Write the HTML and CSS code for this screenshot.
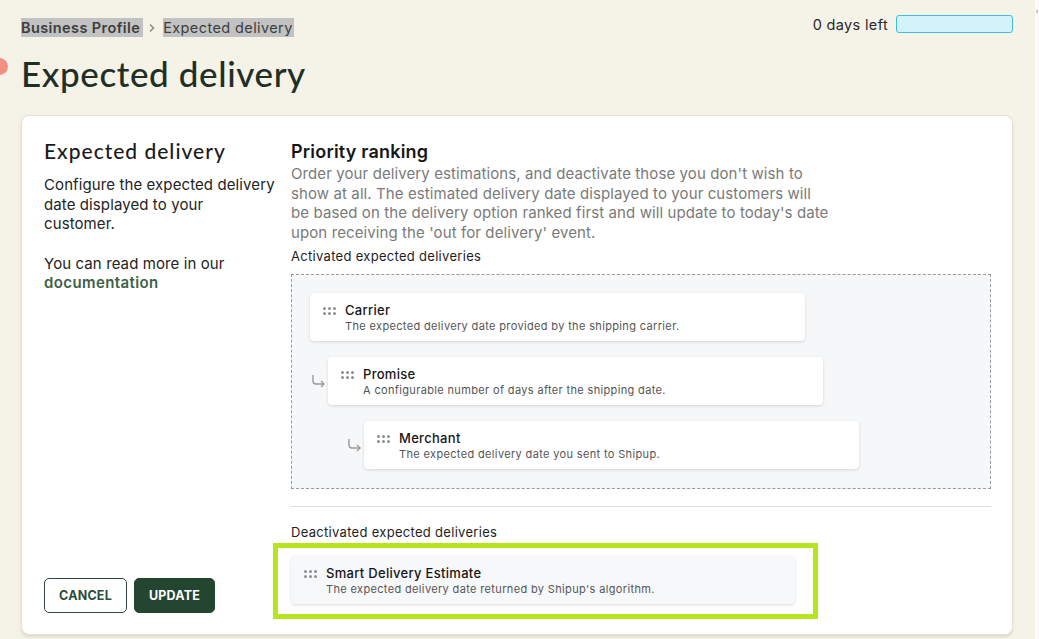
FILE: index.html
```html
<!DOCTYPE html>
<html lang="en">
  <head>
    <meta charset="UTF-8" />
    <meta name="viewport" content="width=device-width, initial-scale=1.0" />
    <title>Expected delivery</title>
    <link rel="stylesheet" href="styles.css">
  </head>
  <body>
    <div class="page">
      <span class="dot"></span>

      <header class="topbar">
        <nav class="crumbs">
          <span class="crumb crumb-parent">Business Profile</span>
          <svg class="crumb-sep" width="10" height="10" viewBox="0 0 10 10">
            <path d="M3 1.5 L6.5 5 L3 8.5" fill="none" stroke="#8a8a8a" stroke-width="1.5" />
          </svg>
          <span class="crumb">Expected delivery</span>
        </nav>
        <div class="trial">
          <span>0 days left</span>
          <div class="trial-bar"></div>
        </div>
      </header>

      <h1 class="page-title">Expected delivery</h1>

      <section class="card">
        <div class="intro">
          <h2>Expected delivery</h2>
          <p>Configure the expected delivery date displayed to your customer.</p>
          <p>You can read more in our <a href="#" class="doc-link">documentation</a></p>

          <div class="actions">
            <button class="btn btn-outline">CANCEL</button>
            <button class="btn btn-primary">UPDATE</button>
          </div>
        </div>

        <div class="ranking">
          <h3>Priority ranking</h3>
          <p class="lead">
            Order your delivery estimations, and deactivate those you don't wish to
            show at all. The estimated delivery date displayed to your customers will
            be based on the delivery option ranked first and will update to today's date
            upon receiving the 'out for delivery' event.
          </p>

          <div class="list-label">Activated expected deliveries</div>
          <div class="dropzone">
            <div class="row">
              <div class="item">
                <span class="grip"><i></i><i></i><i></i><i></i><i></i><i></i></span>
                <div>
                  <div class="item-title">Carrier</div>
                  <div class="item-desc">The expected delivery date provided by the shipping carrier.</div>
                </div>
              </div>
            </div>
            <div class="row">
              <svg class="fallback" width="18" height="16" viewBox="0 0 18 16">
                <path d="M3 2 V8 Q3 11 6 11 H14" fill="none" stroke="#9a9a9a" stroke-width="1.4" />
                <path d="M11 8 L14 11 L11 14" fill="none" stroke="#9a9a9a" stroke-width="1.4" />
              </svg>
              <div class="item">
                <span class="grip"><i></i><i></i><i></i><i></i><i></i><i></i></span>
                <div>
                  <div class="item-title">Promise</div>
                  <div class="item-desc">A configurable number of days after the shipping date.</div>
                </div>
              </div>
            </div>
            <div class="row row-deep">
              <svg class="fallback" width="18" height="16" viewBox="0 0 18 16">
                <path d="M3 2 V8 Q3 11 6 11 H14" fill="none" stroke="#9a9a9a" stroke-width="1.4" />
                <path d="M11 8 L14 11 L11 14" fill="none" stroke="#9a9a9a" stroke-width="1.4" />
              </svg>
              <div class="item">
                <span class="grip"><i></i><i></i><i></i><i></i><i></i><i></i></span>
                <div>
                  <div class="item-title">Merchant</div>
                  <div class="item-desc">The expected delivery date you sent to Shipup.</div>
                </div>
              </div>
            </div>
          </div>

          <hr class="divider" />

          <div class="list-label">Deactivated expected deliveries</div>
          <div class="highlight">
            <div class="item item-off">
              <span class="grip"><i></i><i></i><i></i><i></i><i></i><i></i></span>
              <div>
                <div class="item-title">Smart Delivery Estimate</div>
                <div class="item-desc">The expected delivery date returned by Shipup's algorithm.</div>
              </div>
            </div>
          </div>
        </div>
      </section>
    </div>
    <div class="scrollbar"><span></span></div>
  </body>
</html>
```

FILE: styles.css
```css
:root {
  --page-bg: #f5f2e8;
  --ink: #1f2f25;
  --green: #24452f;
  --muted: #7a7a7a;
  --text: #242424;
}

*,
*::before,
*::after {
  box-sizing: border-box;
}

body {
  margin: 0;
  background-color: var(--page-bg);
  font-family: Inter, "Liberation Sans", Arial, sans-serif;
  color: var(--text);
  display: flex;
  min-height: 639px;
  overflow: hidden;
}

.page {
  position: relative;
  flex: 1;
  padding: 18px 22px 0 21px;
}

.scrollbar {
  width: 4px;
  background-color: #fbfbfa;
  position: relative;
}

.scrollbar span {
  position: absolute;
  top: 10px;
  left: 1px;
  width: 2px;
  height: 3px;
  background-color: #c8c8c8;
}

.dot {
  position: absolute;
  left: -9px;
  top: 58px;
  width: 17px;
  height: 17px;
  border-radius: 50%;
  background-color: #f28f80;
}

/* header */

.topbar {
  display: flex;
  justify-content: space-between;
  align-items: flex-start;
}

.crumbs {
  display: flex;
  align-items: center;
  font-size: 14.5px;
  line-height: 19px;
  letter-spacing: 0.4px;
  color: #3d3d3d;
}

.crumb {
  background-color: #c2c2c2;
  padding-right: 1px;
}

.crumb-parent {
  font-weight: 600;
  padding-right: 3px;
}

.crumb-sep {
  margin: 0 6px 0 4px;
}

.trial {
  display: flex;
  align-items: center;
  gap: 8px;
  font-size: 14.5px;
  letter-spacing: 0.35px;
  color: #2a2a2a;
  margin-top: -3px;
}

.trial-bar {
  width: 117px;
  height: 18px;
  border: 1px solid #3fbcd8;
  border-radius: 3px;
  background-color: #d3f3fb;
}

.page-title {
  margin: 15px 0 0;
  font-family: Lato, "Open Sans", sans-serif;
  font-weight: 500;
  font-size: 35px;
  line-height: 42px;
  letter-spacing: 0.6px;
  color: var(--ink);
}

/* card */

.card {
  margin-top: 21px;
  background-color: #fff;
  border: 1px solid #e6e1d2;
  border-radius: 8px;
  box-shadow: 0 2px 3px rgba(160, 150, 120, 0.25);
  padding: 22px 21px 21px 22px;
  display: grid;
  grid-template-columns: 232px 1fr;
  column-gap: 15px;
}

.intro {
  display: flex;
  flex-direction: column;
}

.intro h2 {
  margin: 0 0 11px;
  font-family: Lato, "Open Sans", sans-serif;
  font-weight: 500;
  font-size: 21px;
  line-height: 26px;
  letter-spacing: 1px;
  color: #1b1b1b;
}

.intro p {
  margin: 0 0 20px;
  font-size: 15px;
  line-height: 19.6px;
  letter-spacing: 0.1px;
  color: #232323;
}

.doc-link {
  color: #3d6147;
  font-weight: 600;
  letter-spacing: 0.4px;
  text-decoration: none;
}

.actions {
  margin-top: auto;
  display: flex;
  gap: 7px;
}

.btn {
  height: 35px;
  border-radius: 5px;
  font-family: Inter, sans-serif;
  font-size: 12.5px;
  font-weight: 700;
  letter-spacing: 0.2px;
  cursor: pointer;
}

.btn-outline {
  width: 83px;
  background-color: #fff;
  border: 1px solid #2e4a3a;
  color: #2e4d3b;
}

.btn-primary {
  width: 81px;
  background-color: var(--green);
  border: 1px solid var(--green);
  color: #fff;
}

/* ranking */

.ranking {
  padding-bottom: 9px;
}

.ranking h3 {
  margin: 2px 0 0;
  font-size: 18px;
  line-height: 24px;
  font-weight: 600;
  letter-spacing: 0.2px;
  color: #161616;
}

.lead {
  margin: 0 0 5px;
  max-width: 540px;
  font-size: 15px;
  line-height: 19.6px;
  letter-spacing: 0.1px;
  color: var(--muted);
}

.list-label {
  font-size: 13px;
  line-height: 18px;
  letter-spacing: 0.3px;
  color: #1e1e1e;
  margin-bottom: 9px;
}

.dropzone {
  background-color: #f6f7f9;
  border: 1px dashed #9a9a9a;
  padding: 18px 18px 19px;
  display: flex;
  flex-direction: column;
  gap: 16px;
}

.row {
  display: flex;
  align-items: center;
}

.row-deep {
  margin-left: 36px;
}

.fallback {
  flex: none;
}

.item {
  width: 495px;
  height: 48px;
  background-color: #fff;
  border-radius: 4px;
  box-shadow: 0 1px 3px rgba(0, 0, 0, 0.14);
  display: flex;
  align-items: flex-start;
  gap: 9px;
  padding: 8px 12px 0 13px;
}

.item-off {
  width: 504px;
  background-color: #f7f8fa;
}

.grip {
  display: grid;
  grid-template-columns: repeat(3, 3px);
  gap: 2px 2px;
  margin-top: 6px;
}

.grip i {
  width: 3px;
  height: 3px;
  border-radius: 50%;
  background-color: #8e8e8e;
}

.item-title {
  font-size: 13px;
  line-height: 18px;
  font-weight: 500;
  letter-spacing: 0.3px;
  color: #161616;
}

.item-desc {
  font-size: 11px;
  line-height: 14px;
  letter-spacing: 0.35px;
  color: #555;
}

.divider {
  border: none;
  border-top: 1px solid #dcdcdc;
  margin: 17px 0 16px;
}

.highlight {
  position: relative;
  margin-top: 15px;
}

.highlight::after {
  content: "";
  position: absolute;
  top: -13px;
  left: -18px;
  width: 545px;
  height: 76px;
  border: 5px solid #b6e51e;
  pointer-events: none;
}
```
